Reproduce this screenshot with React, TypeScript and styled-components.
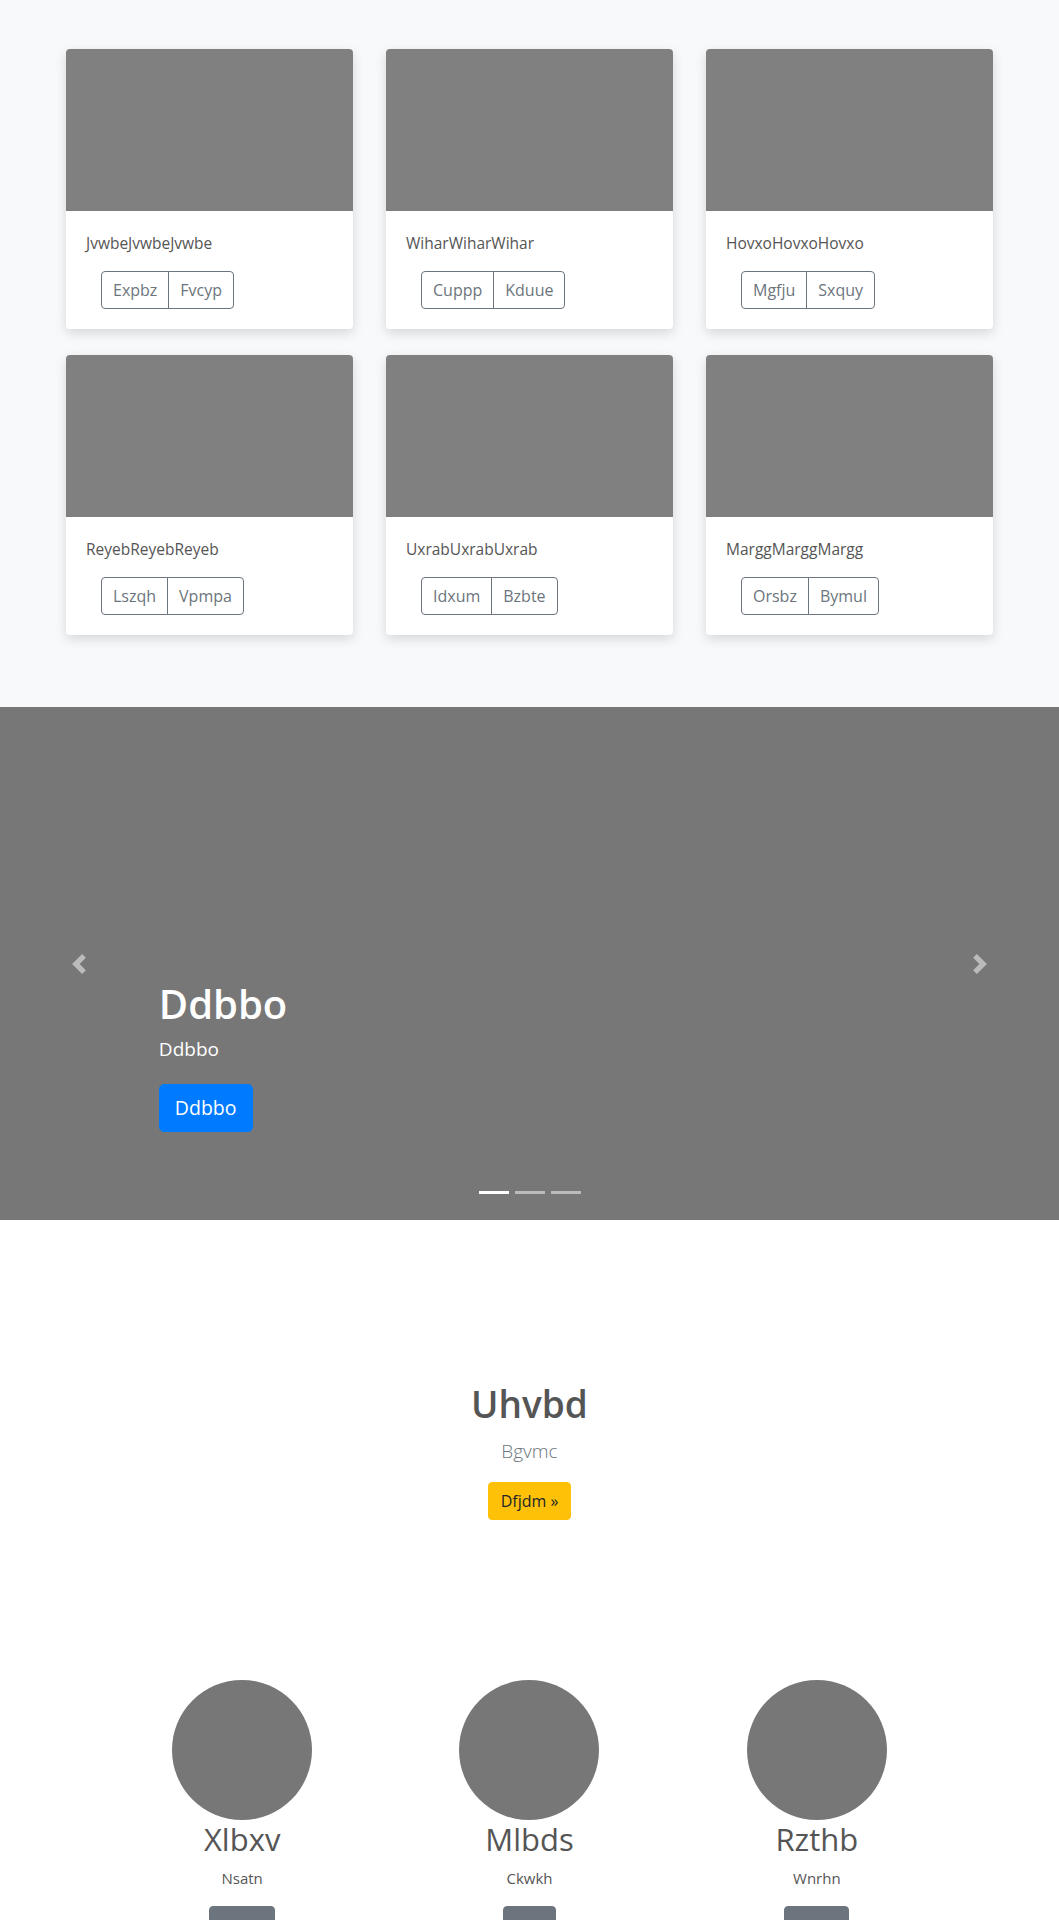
import styled, { createGlobalStyle } from "styled-components";

const GlobalStyle = createGlobalStyle`
  * { box-sizing: border-box; }
  body {
    margin: 0;
    font-family: 'Open Sans', 'Noto Sans', sans-serif;
    color: #212529;
    background: #fff;
  }
`

const Album = styled.section`
  background: #f8f9fa;
  padding: 49px 0 72px;
`

const CardGrid = styled.div`
  width: 927px;
  margin: 0 auto;
  display: grid;
  grid-template-columns: repeat(3, 1fr);
  column-gap: 33px;
  row-gap: 26px;
`

const Card = styled.div`
  background: #fff;
  border-radius: 4px;
  overflow: hidden;
  box-shadow: 0 4px 12px rgba(0, 0, 0, 0.14);
`

const Thumb = styled.div`
  height: 162px;
  background: #808080;
`

const CardBody = styled.div`
  padding: 22px 20px 20px;
`

const CardText = styled.p`
  margin: 0 0 18px;
  font-size: 15.5px;
  line-height: 20px;
  color: #555;
`

const Group = styled.div`
  display: inline-flex;
  margin-left: 15px;
`

const OutlineButton = styled.button`
  font-family: inherit;
  font-size: 16px;
  line-height: 22px;
  padding: 7px 11px;
  background: transparent;
  color: #6c757d;
  border: 1px solid #6c757d;
  border-radius: 4px;
  &:first-child {
    border-top-right-radius: 0;
    border-bottom-right-radius: 0;
  }
  &:last-child {
    margin-left: -1px;
    border-top-left-radius: 0;
    border-bottom-left-radius: 0;
  }
`

const Carousel = styled.section`
  position: relative;
  height: 513px;
  background: #777;
  overflow: hidden;
`

const Control = styled.button<{ $side: "left" | "right" }>`
  position: absolute;
  top: 0;
  bottom: 0;
  ${(p) => (p.$side === "left" ? "left: 0;" : "right: 0;")}
  width: 15%;
  display: flex;
  align-items: center;
  justify-content: center;
  background: none;
  border: 0;
  padding: 0;
  opacity: 0.5;
`

const Caption = styled.div`
  position: absolute;
  left: 15%;
  right: 15%;
  bottom: 88px;
  color: #fff;
`

const CaptionTitle = styled.h1`
  margin: 0 0 6px;
  font-size: 40px;
  line-height: 48px;
  font-weight: 600;
`

const CaptionText = styled.p`
  margin: 0 0 20px;
  font-size: 19px;
  line-height: 30px;
  font-weight: 500;
`

const PrimaryLg = styled.button`
  font-family: inherit;
  font-size: 19.5px;
  line-height: 30px;
  padding: 8px 15px;
  background: #007bff;
  color: #fff;
  border: 1px solid #007bff;
  border-radius: 5px;
`

const Indicators = styled.div`
  position: absolute;
  left: 0;
  right: 0;
  bottom: 26px;
  display: flex;
  justify-content: center;
  gap: 6px;
`

const Dot = styled.span<{ $active?: boolean }>`
  width: 30px;
  height: 3px;
  background: ${(p) => (p.$active ? "#fff" : "rgba(255,255,255,0.5)")};
`

const Hero = styled.section`
  padding: 160px 0;
  text-align: center;
`

const HeroTitle = styled.h2`
  margin: 0 0 8px;
  font-size: 37px;
  line-height: 48px;
  font-weight: 600;
  color: #555;
`

const Lead = styled.p`
  margin: 0 0 16px;
  font-size: 19px;
  line-height: 30px;
  font-weight: 300;
  color: #6c757d;
`

const WarningButton = styled.button`
  font-family: inherit;
  font-size: 16px;
  line-height: 22px;
  padding: 7px 12px;
  background: #ffc107;
  color: #212529;
  border: 1px solid #ffc107;
  border-radius: 4px;
`

const Marketing = styled.section`
  width: 862px;
  margin: 0 auto;
  display: grid;
  grid-template-columns: repeat(3, 1fr);
  text-align: center;
`

const Feature = styled.div`
  display: flex;
  flex-direction: column;
  align-items: center;
`

const Avatar = styled.div`
  width: 140px;
  height: 140px;
  border-radius: 50%;
  background: #777;
`

const FeatureTitle = styled.h3`
  margin: 0 0 8px;
  font-size: 31px;
  line-height: 38px;
  font-weight: 400;
  color: #555;
`

const FeatureText = styled.p`
  margin: 0 0 16px;
  font-size: 15px;
  line-height: 24px;
  color: #555;
`

const SecondaryButton = styled.button`
  font-family: inherit;
  font-size: 15px;
  line-height: 22px;
  padding: 7px 12px;
  background: #6c757d;
  color: #fff;
  border: 1px solid #6c757d;
  border-radius: 4px;
`

const cards = [
  { title: "JvwbeJvwbeJvwbe", a: "Expbz", b: "Fvcyp" },
  { title: "WiharWiharWihar", a: "Cuppp", b: "Kduue" },
  { title: "HovxoHovxoHovxo", a: "Mgfju", b: "Sxquy" },
  { title: "ReyebReyebReyeb", a: "Lszqh", b: "Vpmpa" },
  { title: "UxrabUxrabUxrab", a: "Idxum", b: "Bzbte" },
  { title: "MarggMarggMargg", a: "Orsbz", b: "Bymul" },
]

const features = [
  { name: "Xlbxv", text: "Nsatn", action: "Vfhdk" },
  { name: "Mlbds", text: "Ckwkh", action: "Hilk" },
  { name: "Rzthb", text: "Wnrhn", action: "Ofldq" },
]

function Chevron({ dir }: { dir: "prev" | "next" }) {
  return (
    <svg width="20" height="20" viewBox="0 0 8 8" fill="#fff">
      {dir === "prev" ? (
        <path d="M5.25 0l-4 4 4 4 1.5-1.5L4.25 4l2.5-2.5L5.25 0z" />
      ) : (
        <path d="M2.75 0l-1.5 1.5L3.75 4l-2.5 2.5L2.75 8l4-4-4-4z" />
      )}
    </svg>
  );
}

function App() {
  return (
    <>
      <GlobalStyle />
      <Album>
        <CardGrid>
          {cards.map((c) => (
            <Card key={c.title}>
              <Thumb />
              <CardBody>
                <CardText>{c.title}</CardText>
                <Group>
                  <OutlineButton>{c.a}</OutlineButton>
                  <OutlineButton>{c.b}</OutlineButton>
                </Group>
              </CardBody>
            </Card>
          ))}
        </CardGrid>
      </Album>

      <Carousel>
        <Control $side="left">
          <Chevron dir="prev" />
        </Control>
        <Control $side="right">
          <Chevron dir="next" />
        </Control>
        <Caption>
          <CaptionTitle>Ddbbo</CaptionTitle>
          <CaptionText>Ddbbo</CaptionText>
          <PrimaryLg>Ddbbo</PrimaryLg>
        </Caption>
        <Indicators>
          <Dot $active />
          <Dot />
          <Dot />
        </Indicators>
      </Carousel>

      <Hero>
        <HeroTitle>Uhvbd</HeroTitle>
        <Lead>Bgvmc</Lead>
        <WarningButton>Dfjdm »</WarningButton>
      </Hero>

      <Marketing>
        {features.map((f) => (
          <Feature key={f.name}>
            <Avatar />
            <FeatureTitle>{f.name}</FeatureTitle>
            <FeatureText>{f.text}</FeatureText>
            <SecondaryButton>{f.action}</SecondaryButton>
          </Feature>
        ))}
      </Marketing>
    </>
  );
}

export default App;
